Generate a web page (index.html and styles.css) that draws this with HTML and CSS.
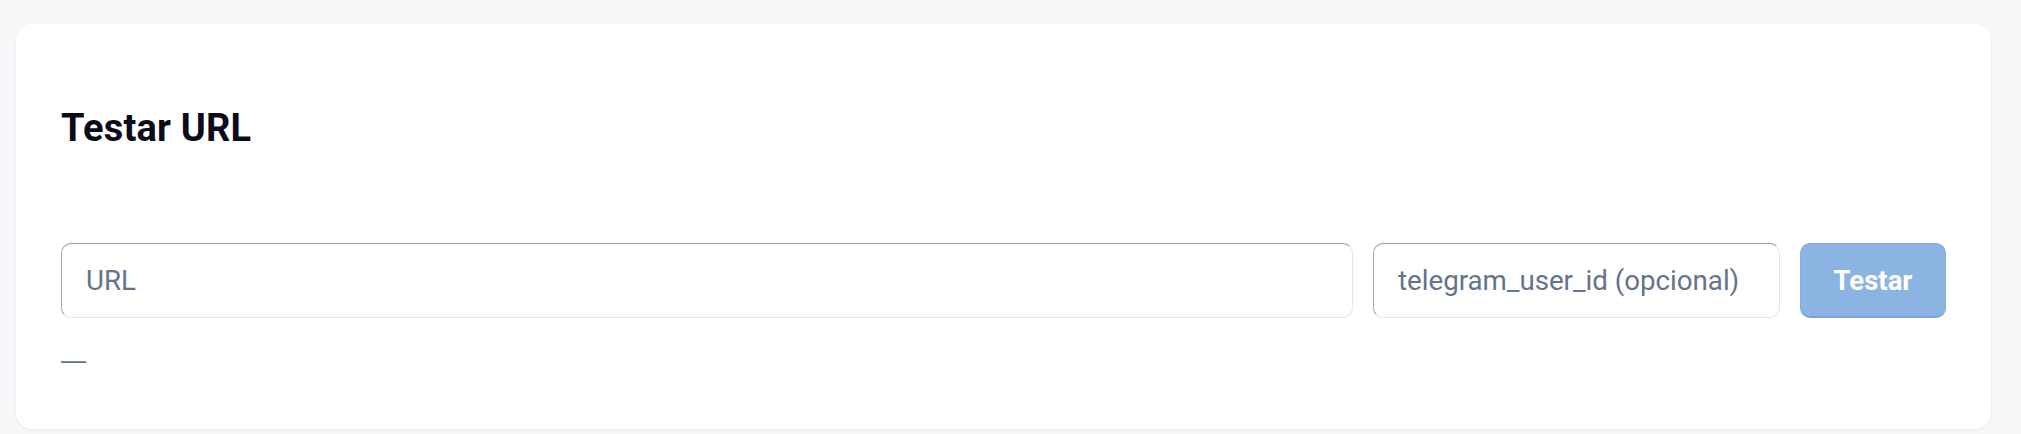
FILE: index.html
```html
<!DOCTYPE html>
<html lang="pt">

<head>
    <meta charset="UTF-8" />
    <meta name="viewport" content="width=device-width, initial-scale=1" />
    <title>Testar URL</title>
    <link rel="stylesheet" href="styles.css">
</head>

<body>

    <!-- fim do card anterior -->
    <div class="card-edge"></div>

    <!-- Testar URL -->
    <section class="card">
        <h2 class="card-title">Testar URL</h2>
        <div class="test-row">
            <input type="text" class="field field-url" placeholder="URL" />
            <input type="text" class="field field-user" placeholder="telegram_user_id (opcional)" />
            <button class="btn-test" disabled>Testar</button>
        </div>
        <div class="test-result">—</div>
    </section>

</body>

</html>
```

FILE: styles.css
```css
* {
    margin: 0;
    padding: 0;
    box-sizing: border-box;
    font-family: 'Roboto', 'Liberation Sans', Arial, sans-serif;
}

html,
body {
    background-color: #f7f8fa;
    width: 100%;
    height: 100%;
    overflow: hidden;
}

body {
    padding: 0 30px 0 16px;
}

.card-edge {
    height: 0;
    margin: 0 10px;
    box-shadow: 0 1px 3px rgba(15, 23, 42, 0.08);
}

.card {
    margin-top: 24px;
    background-color: #ffffff;
    border-radius: 16px;
    box-shadow: 0 1px 3px rgba(15, 23, 42, 0.07);
    padding: 82px 45px 48px;
}

.card-title {
    font-size: 38px;
    line-height: 44px;
    font-weight: 700;
    color: #0b0b1a;
    letter-spacing: 0.2px;
}

.test-row {
    display: flex;
    gap: 20px;
    margin-top: 93px;
    height: 75px;
}

.field {
    height: 75px;
    padding: 0 24px;
    font-size: 27.7px;
    color: #1e293b;
    background-color: #ffffff;
    border: 1px solid #e2e8f0;
    border-top-color: #9a9ca3;
    border-left-color: #a5a8af;
    border-radius: 10px;
    outline: none;
}

.field::placeholder {
    color: #64748b;
}

.field-url {
    flex: 1;
}

.field-user {
    width: 407px;
}

.btn-test {
    width: 146px;
    height: 75px;
    font-size: 27.5px;
    font-weight: 700;
    color: #ffffff;
    background-color: #8cb4e2;
    border: 1px solid #86acd9;
    border-bottom: 2px solid #7fa3cf;
    border-radius: 10px;
}

.test-result {
    margin-top: 21px;
    font-family: 'Liberation Sans', Arial, sans-serif;
    font-size: 25px;
    line-height: 42px;
    color: #64748b;
}
```
